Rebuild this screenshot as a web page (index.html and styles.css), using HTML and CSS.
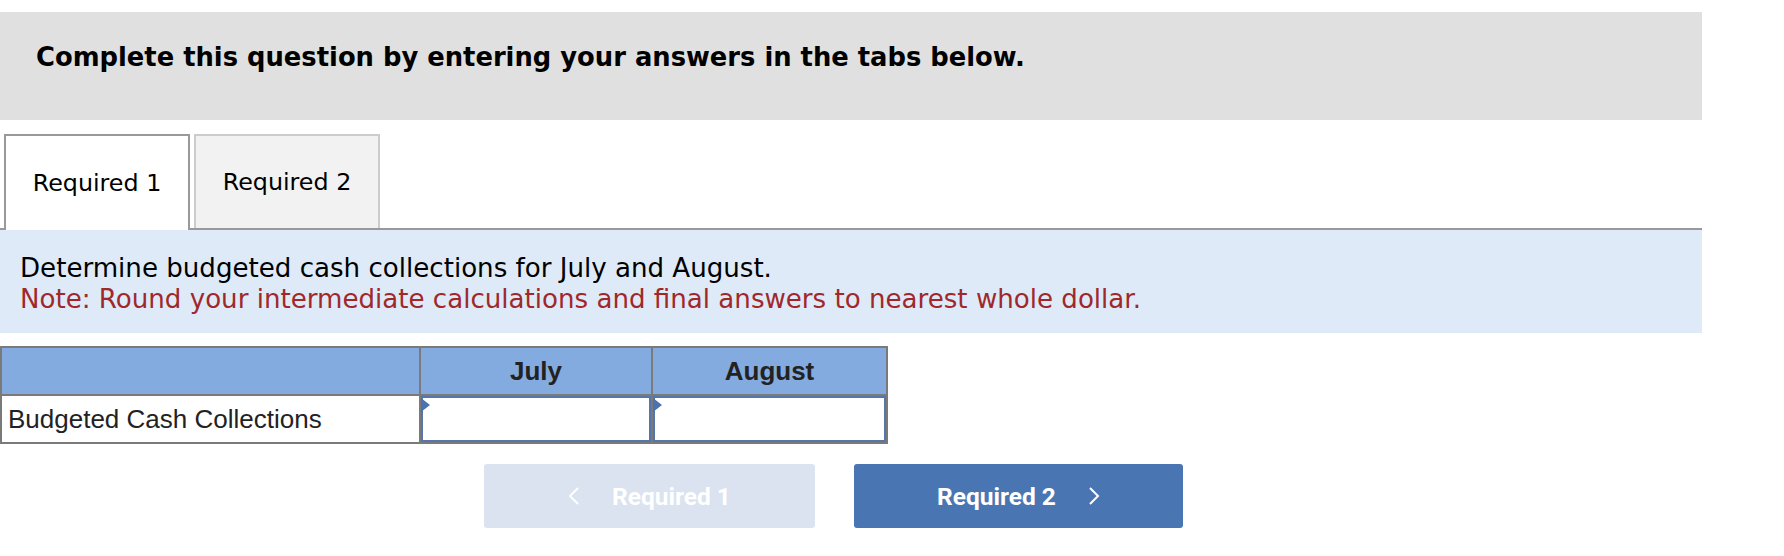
FILE: index.html
```html
<!DOCTYPE html>
<html lang="en">
<head>
    <meta charset="UTF-8">
    <title>Required 1</title>
    <link rel="stylesheet" href="styles.css">
</head>
<body>
    <div class="intro">Complete this question by entering your answers in the tabs below.</div>

    <div class="tabs">
        <div class="tab active">Required 1</div>
        <div class="tab">Required 2</div>
    </div>

    <div class="instructions">
        <div>Determine budgeted cash collections for July and August.</div>
        <div class="note">Note: Round your intermediate calculations and final answers to nearest whole dollar.</div>
    </div>

    <table class="answer-table">
        <tr>
            <th class="label-col"></th>
            <th class="value-col">July</th>
            <th class="value-col last">August</th>
        </tr>
        <tr>
            <td class="row-label">Budgeted Cash Collections</td>
            <td class="entry"><span class="entry-box"><input type="text" aria-label="July"></span></td>
            <td class="entry"><span class="entry-box"><input type="text" aria-label="August"></span></td>
        </tr>
    </table>

    <div class="nav">
        <button class="nav-btn disabled" type="button">
            <svg width="12" height="20" viewBox="0 0 12 20"><polyline points="10,2 2,10 10,18" fill="none" stroke="#fff" stroke-width="2"/></svg>
            <span>Required 1</span>
        </button>
        <button class="nav-btn primary" type="button">
            <span>Required 2</span>
            <svg width="12" height="20" viewBox="0 0 12 20"><polyline points="2,2 10,10 2,18" fill="none" stroke="#fff" stroke-width="2"/></svg>
        </button>
    </div>
</body>
</html>
```

FILE: styles.css
```css
body { margin: 0; font-family: "DejaVu Sans", Verdana, sans-serif; color: #000; background: #fff; }
.intro { width: 1702px; box-sizing: border-box; margin-top: 12px; height: 108px; padding: 30px 0 0 36px; background: #e0e0e0; font-weight: bold; font-size: 25.8px; line-height: 30px; }
.tabs { display: flex; gap: 4px; width: 1702px; margin-top: 14px; padding-left: 4px; box-sizing: border-box; border-bottom: 2px solid #999; }
.tab { width: 186px; height: 94px; box-sizing: border-box; border: 2px solid #ccc; border-bottom: none; background: #f2f2f2; font-size: 23.8px; display: flex; align-items: center; justify-content: center; }
.tab.active { height: 96px; margin-bottom: -2px; border-color: #999; background: #fff; }
.instructions { width: 1702px; box-sizing: border-box; padding: 23px 0 19px 20px; background: #deeaf7; font-size: 26.1px; line-height: 30.5px; }
.note { color: #a0282b; }
.answer-table { margin-top: 13px; border-collapse: collapse; font-family: "Liberation Sans", Arial, sans-serif; font-size: 26px; color: #222; }
.answer-table th, .answer-table td { border: 2px solid #7a7a7a; padding: 0; }
.answer-table th { background: #84abdf; height: 46px; font-weight: bold; }
.label-col { width: 417px; }
.value-col { width: 230px; }
.value-col.last { width: 233px; }
.row-label { height: 46px; padding-left: 6px !important; text-align: left; }
.entry { vertical-align: top; }
.entry-box { position: relative; display: block; }
.entry-box::before { content: ""; position: absolute; left: 0; top: 2px; border-left: 9px solid #4a72b0; border-top: 7px solid transparent; border-bottom: 7px solid transparent; }
.entry input { display: block; width: 100%; height: 46px; box-sizing: border-box; margin: 0; border: 2px solid #5576aa; background: #fff; font-size: 20px; }
.nav { display: flex; gap: 39px; margin-top: 20px; padding-left: 484px; }
.nav-btn { width: 331px; height: 64px; border: none; border-radius: 3px; display: flex; align-items: center; justify-content: center; gap: 32px; font-family: Roboto, "Liberation Sans", sans-serif; font-weight: bold; font-size: 24.5px; color: #fff; }
.nav-btn.disabled { background: #dae3ef; }
.nav-btn.primary { background: #4a75b3; width: 329px; }
```
